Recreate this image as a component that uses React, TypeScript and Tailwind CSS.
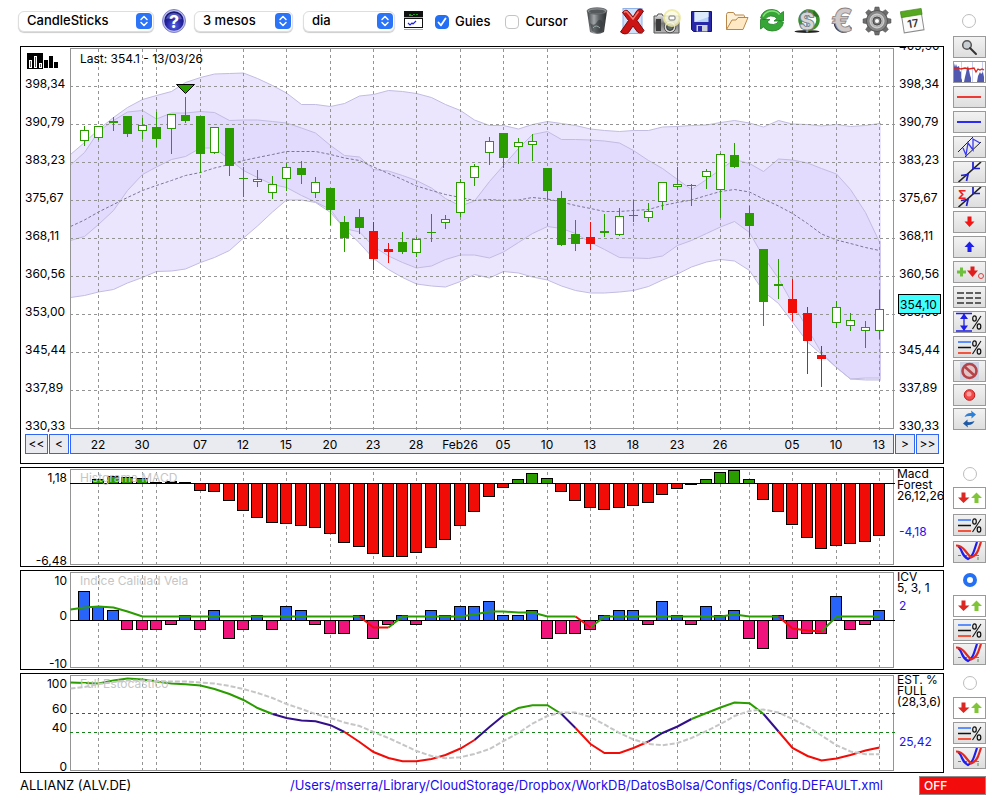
import React, { useState } from "react";

/* ---------- shared chart geometry ---------- */

const COUNT = 56;
const LEFT = 70;
const RIGHT = 894;
const GREEN = "#2a9c00";
const RED = "#f20c07";
const GRID = "#949494";

const xs = Array.from({ length: COUNT }, (_, i) => Math.round(84 + 14.454 * i));
const guideIndexes = [1, 4, 5, 8, 11, 14, 17, 20, 23, 26, 29, 32, 35, 38, 41, 44, 46, 49, 52, 55];
const dateLabels: [number, string][] = [
  [1, "22"], [4, "30"], [8, "07"], [11, "12"], [14, "15"], [17, "20"], [20, "23"], [23, "28"],
  [26, "Feb26"], [29, "05"], [32, "10"], [35, "13"], [38, "18"], [41, "23"], [44, "26"],
  [49, "05"], [52, "10"], [55, "13"],
];
const prices = ["405,90", "398,34", "390,79", "383,23", "375,67", "368,11", "360,56", "353,00", "345,44", "337,89", "330,33"];

type Candle = [number, number, number, number, "w" | "g" | "r"];
const candles: Candle[] = [
  [126, 130, 141, 146, "w"], [126, 126, 138, 140, "w"], [117, 121, 123, 131, "g"], [116, 116, 134, 137, "g"],
  [118, 125, 131, 139, "w"], [112, 127, 139, 147, "g"], [114, 114, 129, 154, "w"], [97, 115, 121, 123, "g"],
  [116, 116, 154, 173, "g"], [127, 127, 153, 154, "w"], [128, 128, 166, 176, "g"], [167, 178, 179, 197, "g"],
  [170, 179, 182, 187, "w"], [176, 184, 193, 199, "w"], [163, 167, 179, 191, "w"], [161, 168, 175, 184, "g"],
  [177, 182, 193, 198, "w"], [188, 188, 210, 225, "g"], [216, 222, 238, 252, "g"], [209, 217, 228, 234, "g"],
  [222, 231, 259, 270, "r"], [243, 249, 252, 263, "r"], [232, 242, 252, 254, "g"], [237, 239, 253, 257, "w"],
  [214, 232, 233, 242, "g"], [215, 219, 223, 229, "w"], [179, 182, 213, 217, "w"], [164, 166, 178, 186, "w"],
  [137, 141, 153, 165, "w"], [133, 133, 158, 168, "g"], [138, 142, 147, 164, "w"], [134, 141, 145, 161, "w"],
  [168, 168, 191, 200, "g"], [191, 198, 245, 246, "g"], [220, 234, 244, 251, "g"], [222, 237, 244, 250, "r"],
  [214, 231, 233, 237, "g"], [208, 216, 235, 236, "w"], [200, 215, 216, 222, "g"], [203, 211, 218, 222, "w"],
  [182, 182, 202, 210, "w"], [167, 184, 187, 190, "w"], [184, 185, 186, 206, "g"], [169, 171, 177, 189, "w"],
  [153, 154, 190, 218, "w"], [143, 155, 167, 168, "g"], [206, 213, 226, 237, "g"], [249, 249, 302, 326, "g"],
  [259, 284, 286, 299, "g"], [279, 299, 313, 321, "r"], [307, 313, 341, 374, "r"], [346, 355, 359, 387, "r"],
  [301, 307, 323, 328, "w"], [313, 320, 326, 331, "w"], [321, 327, 331, 348, "w"], [290, 309, 331, 339, "w"],
];

/* Each series starts with its value on the left edge of the plot. */
const outerUpper = [154, 142, 129, 117, 107, 99, 95, 91, 82, 77, 73.5, 73, 72.5, 78, 85, 92.5, 104, 104, 106, 103, 95.5, 94, 90, 91, 93, 97, 104, 110, 119.5, 125, 125, 128.5, 124, 121, 123, 125, 128.5, 130, 131, 130, 130, 126.5, 126, 125, 124.5, 122, 120, 122.5, 126.5, 120, 123.5, 124, 125.5, 124, 126, 125, 123];
const innerUpper = [164.5, 152, 131, 120, 111.5, 110, 118.5, 112.5, 112.5, 111, 112, 120, 119.5, 119.5, 121, 122.5, 127.5, 132.5, 145, 155, 156.5, 169, 170.5, 175, 180, 187.5, 198, 205.5, 200.5, 181, 165, 148, 134, 131, 139, 139, 139.5, 140.5, 142.5, 150, 160, 168, 179, 189, 179, 169, 159, 163, 171, 158.5, 159.5, 162.5, 168, 173.5, 189, 212, 241.5];
const innerLower = [240, 236, 224, 210, 190, 174, 166.5, 159, 156, 147.5, 147.5, 159, 170, 177, 184, 187, 195, 201.5, 209, 228, 231.5, 246, 255.5, 262, 267.5, 265.5, 259, 254.5, 254.5, 257.5, 251.5, 242, 233, 226, 228, 233, 242, 249, 257, 257.5, 258, 255.5, 245, 240, 233, 226.5, 221, 232, 256.5, 278, 303, 328, 352.5, 367, 378.5, 377.5, 377.5];
const outerLower = [297, 295, 291.5, 289, 282.5, 277, 271, 270.5, 268.5, 262, 257, 250, 237.5, 225.5, 211.5, 199.5, 199.5, 202, 212, 228, 242.5, 258, 269, 277, 283.5, 285.5, 286.5, 281, 274, 277.5, 271, 272.5, 276.5, 279.5, 285.5, 290, 292.5, 292.5, 291.5, 290, 286, 279.5, 273.5, 266.5, 261.5, 259, 260.5, 270, 291, 303, 321.5, 341.5, 354, 367, 378.5, 379.5, 379.5];
const average = [226, 219.5, 211.5, 204, 197, 190, 185, 180, 175, 172, 167.5, 164, 160, 157, 154, 151, 151, 151, 154, 157.5, 160, 166.5, 173, 179, 185.5, 190, 194, 197, 200, 199, 200, 199.5, 197, 198.5, 201.5, 205, 208, 211, 211, 210, 209, 205, 202, 199.5, 195, 191, 189, 191.5, 198.5, 205.5, 213, 223, 233.5, 239.5, 243, 247, 250];
const macd = [483, 479, 476, 477, 478, 482, 481, 482, 491, 492, 501, 511, 518, 523, 524, 526, 528, 534, 543, 547, 554, 557, 557, 553, 548, 540, 526, 512, 497, 488, 479, 473, 478, 492, 501, 508, 510, 508, 506, 503, 495, 489, 485, 479, 472, 470, 479, 500, 512, 525, 538, 549, 546, 544, 542, 536];
const quality = [6, 3, 2, -2, -2, -2, -1, 1, -2, 2, -4, -2, 1, -2, 3, 2, -1, -3, -3, 1, -4, -1, 1, -1, 2, 1, 3, 3, 4, 1, 1, 2, -4, -3, -3, -2, 1, 2, 2, -1, 4, 1, -1, 3, 1, 2, -4, -6, 1, -4, -3, -3, 5, -2, -1, 2];
const qualityLine = [609, 607, 606, 607, 611, 616, 616, 616, 616, 616, 616, 616, 616, 616, 616, 616, 616, 616, 616, 616, 616, 627, 627, 616, 616, 616, 616, 616, 614, 611, 611, 612, 612, 616, 616, 616, 627, 616, 616, 616, 616, 616, 616, 616, 616, 616, 614, 616, 616, 616, 628, 630, 631, 616, 616, 616, 616];
const stochastic = [682, 682.5, 683, 680, 678, 679, 681, 683, 683.7, 685, 688.5, 693.5, 699.5, 707.5, 713.5, 717.5, 720, 720.7, 724.7, 731.5, 741.5, 751.5, 757.5, 760.7, 760.7, 758.5, 754.5, 748, 739.5, 726.5, 715, 707.5, 704.7, 704.7, 713.5, 727.5, 743.5, 752.5, 752.5, 747.5, 741, 732.5, 726, 718.5, 712.5, 707, 702, 702.7, 713.5, 731, 747.5, 755.5, 760, 758, 754.5, 750, 747];
const signal = [688, 686.5, 683.5, 681.5, 680, 680, 680.5, 681, 681, 682, 683, 685.5, 688.5, 692.5, 697.5, 703.5, 708.5, 713.5, 717.5, 722, 725.5, 731.5, 737.5, 744, 750.5, 755.5, 757.7, 756.7, 753.5, 748.5, 740.5, 732.5, 723, 715.5, 712, 712, 716.5, 724, 732.5, 739, 743.5, 744.7, 742.5, 737.5, 730.5, 723.5, 715.5, 710.5, 709, 712, 718.5, 726, 735, 744.7, 751, 753.7, 753.7];

const px = (k: number) => (k === 0 ? LEFT + 0.5 : xs[k - 1] + 0.5);
const line = (s: number[], from = 0, to = s.length - 1) =>
  s.slice(from, to + 1).map((y, k) => `${px(from + k)},${y + 0.5}`).join(" ");
const bandLine = (s: number[]) => `${line(s)} 881,${s[s.length - 1] + 0.5}`;
const band = (top: number[], bottom: number[]) =>
  `${bandLine(top)} ${bandLine(bottom).split(" ").reverse().join(" ")}`;

function Guides({ top, bottom }: { top: number; bottom: number }) {
  return (
    <g stroke={GRID} strokeDasharray="3 3" shapeRendering="crispEdges">
      {guideIndexes.map((i) => (
        <line key={i} x1={xs[i] + 0.5} x2={xs[i] + 0.5} y1={top} y2={bottom} />
      ))}
    </g>
  );
}

function Frame({ top, bottom }: { top: number; bottom: number }) {
  return (
    <rect x={LEFT + 0.5} y={top + 0.5} width={RIGHT - LEFT - 1} height={bottom - top - 1} fill="none" stroke={GRID} shapeRendering="crispEdges" />
  );
}

/* ---------- chart panels ---------- */

function PriceChart({ guides }: { guides: boolean }) {
  return (
    <svg viewBox="21 47 922 385" className="block h-auto w-full text-[12px]" role="img" aria-label="CandleSticks">
      <polygon points={band(outerUpper, outerLower)} fill="#ebe6fe" />
      <polygon points={band(innerUpper, innerLower)} fill="#e3dbfd" />
      <g fill="none" stroke="#c3bce2" strokeWidth="1">
        {[outerUpper, innerUpper, innerLower, outerLower].map((s, k) => (
          <polyline key={k} points={bandLine(s)} />
        ))}
      </g>
      <rect x="879" y="242" width="2" height="137" fill="#d3cbef" />
      <polyline points={line(average)} fill="none" stroke="#7e7699" strokeDasharray="3 2" />
      {guides && (
        <>
          <Guides top={49} bottom={430} />
          <g stroke={GRID} strokeDasharray="3 3" shapeRendering="crispEdges">
            {prices.slice(1, 10).map((p, k) => (
              <line key={p} x1={LEFT} x2={RIGHT + 2} y1={86.5 + 38 * k} y2={86.5 + 38 * k} />
            ))}
          </g>
        </>
      )}
      <Frame top={48} bottom={429} />
      <g shapeRendering="crispEdges">
        {candles.map(([high, top, bottom, low, kind], i) => {
          const color = kind === "r" ? RED : GREEN;
          return (
            <g key={i}>
              <rect x={xs[i]} y={high} width="1" height={low - high} fill={color} />
              <rect x={xs[i] - 4} y={top} width="9" height={bottom - top} fill={color} />
              {kind === "w" && <rect x={xs[i] - 3} y={top + 1} width="7" height={bottom - top - 2} fill="#fff" />}
            </g>
          );
        })}
      </g>
      <path d="M176.5 84.5h18l-9 9z" fill={GREEN} stroke="#000" />
      <text x="80" y="63">Last: 354.1 - 13/03/26</text>
      <g shapeRendering="crispEdges">
        <path d="M27 53h16v16h-16z" fill="#000" />
        <path d="M29.500 60.500h2v7h-2zM34.500 56.500h2v11h-2zM39.500 63.500h2v4h-2z" fill="#555" stroke="#fff" />
        <path d="M44 60h4v8h-4zM49 56h4v12h-4zM54 62h4v6h-4z" fill="#000" />
      </g>
      {prices.map((p, k) => (
        <g key={p}>
          {k > 0 && <text x="25" y={50 + 38 * k}>{p}</text>}
          <text x="899" y={50 + 38 * k}>{p}</text>
        </g>
      ))}
      <rect x="898.5" y="294.500" width="42" height="19" fill="#40ffff" stroke="#000" shapeRendering="crispEdges" />
      <text x="900" y="309">354,10</text>
    </svg>
  );
}

function NavButton({ label, text }: { label: string; text: string }) {
  return (
    <button type="button" aria-label={label} className="border border-[#3366ee] bg-[#eaebf0] text-[12px] leading-[18px]">
      {text}
    </button>
  );
}

function DateBar() {
  return (
    <div className="mb-[9px] grid grid-cols-[23fr_20fr_824fr_20fr_23fr] gap-px pl-1 pr-[4px] pt-[2px]">
      <NavButton label="First" text="<<" />
      <NavButton label="Previous" text="<" />
      <div className="border border-[#3366ee] bg-[#eaebf0]">
        <svg viewBox="71 435 822 18" className="block h-auto w-full text-[12px]">
          {dateLabels.map(([i, label]) => (
            <text key={i} x={xs[i]} y="449" textAnchor="middle">{label}</text>
          ))}
        </svg>
      </div>
      <NavButton label="Next" text=">" />
      <NavButton label="Last" text=">>" />
    </div>
  );
}

function MacdChart({ guides }: { guides: boolean }) {
  return (
    <svg viewBox="21 468 922 98" className="block h-auto w-full text-[12px]" role="img" aria-label="Macd Forest">
      {guides && <Guides top={472} bottom={566} />}
      <Frame top={469} bottom={565} />
      <g shapeRendering="crispEdges">
        {macd.map((y, i) => {
          if (i === 0) return null;
          const up = y < 483;
          const top = up ? y : 483;
          const height = up ? 484 - y : y - 483;
          return (
            <g key={i}>
              <rect x={xs[i] - 6} y={top} width="12" height={height} fill="#000" />
              {height > 3 && <rect x={xs[i] - 5} y={top + 1} width="10" height={height - 2} fill={up ? GREEN : RED} />}
            </g>
          );
        })}
        <rect x={LEFT} y="483" width={RIGHT - LEFT + 1} height="1" fill="#000" />
      </g>
      <text x="80" y="482" fill="#c6c6c6">Histgrama MACD</text>
      <text x="67" y="482" textAnchor="end">1,18</text>
      <text x="67" y="565" textAnchor="end">-6,48</text>
      <text x="897" y="478">Macd</text>
      <text x="897" y="489">Forest</text>
      <text x="897" y="500">26,12,26</text>
      <text x="899" y="536" fill="#1a14ee">-4,18</text>
    </svg>
  );
}

function QualityChart({ guides }: { guides: boolean }) {
  return (
    <svg viewBox="21 571 922 98" className="block h-auto w-full text-[12px]" role="img" aria-label="ICV">
      <text x="80" y="585" fill="#c6c6c6">Indice Calidad Vela</text>
      {guides && <Guides top={575} bottom={669} />}
      <Frame top={572} bottom={668} />
      <g shapeRendering="crispEdges">
        {quality.map((v, i) => {
          const edge = Math.round(620 - 4.8 * v);
          const top = v > 0 ? edge : 620;
          const height = v > 0 ? 621 - edge : edge - 620;
          return (
            <g key={i}>
              <rect x={xs[i] - 6} y={top} width="12" height={height} fill="#000" />
              <rect x={xs[i] - 5} y={top + 1} width="10" height={height - 2} fill={v > 0 ? "#2864fa" : "#f0137c"} />
            </g>
          );
        })}
        <rect x={LEFT} y="620" width={RIGHT - LEFT + 1} height="1" fill="#000" />
      </g>
      <g fill="none" stroke={GREEN} strokeWidth="2">
        <polyline points={line(qualityLine, 0, 20)} />
        <polyline points={line(qualityLine, 22, 35)} />
        <polyline points={line(qualityLine, 36, 49)} />
        <polyline points={line(qualityLine, 52, 56)} />
      </g>
      <g fill="none" stroke={RED} strokeWidth="2">
        <polyline points={line(qualityLine, 20, 22)} />
        <polyline points={line(qualityLine, 35, 36)} />
        <polyline points={line(qualityLine, 49, 52)} />
      </g>
      <text x="67" y="585" textAnchor="end">10</text>
      <text x="67" y="620" textAnchor="end">0</text>
      <text x="67" y="668" textAnchor="end">-10</text>
      <text x="897" y="581">ICV</text>
      <text x="897" y="592">5, 3, 1</text>
      <text x="899" y="610" fill="#1a14ee">2</text>
    </svg>
  );
}

const stochasticParts: [number, number, string][] = [
  [0, 14, GREEN], [14, 19, "#33108a"], [19, 28, RED], [28, 30, "#33108a"], [30, 34, GREEN],
  [34, 35, "#33108a"], [35, 40, RED], [40, 43, "#33108a"], [43, 48, GREEN], [48, 49, "#33108a"], [49, 56, RED],
];

function StochasticChart({ guides }: { guides: boolean }) {
  return (
    <svg viewBox="21 674 922 98" className="block h-auto w-full text-[12px]" role="img" aria-label="Full Estocastico">
      {guides && <Guides top={678} bottom={772} />}
      <Frame top={675} bottom={771} />
      <g strokeDasharray="3 3" shapeRendering="crispEdges">
        <line x1={LEFT} x2={RIGHT + 1} y1="713.5" y2="713.5" stroke={RED} />
        <line x1={LEFT} x2={RIGHT + 1} y1="732.5" y2="732.5" stroke="#15801a" />
      </g>
      <g fill="none" strokeWidth="2">
        {stochasticParts.map(([from, to, color]) => (
          <polyline key={from} points={line(stochastic, from, to)} stroke={color} />
        ))}
        <polyline points={line(signal)} stroke="#c6c6c6" strokeDasharray="5 2" />
      </g>
      <text x="80" y="688" fill="#c6c6c6">Full Estocastico</text>
      <text x="67" y="688" textAnchor="end">100</text>
      <text x="67" y="713" textAnchor="end">60</text>
      <text x="67" y="732" textAnchor="end">40</text>
      <text x="67" y="771" textAnchor="end">0</text>
      <text x="897" y="684">EST. %</text>
      <text x="897" y="695">FULL</text>
      <text x="897" y="706">(28,3,6)</text>
      <text x="899" y="746" fill="#1a14ee">25,42</text>
    </svg>
  );
}

/* ---------- toolbar ---------- */

function Picker({ label, options, className }: { label: string; options: string[]; className: string }) {
  return (
    <div className={`relative h-[21px] ${className}`}>
      <select
        aria-label={label}
        className="block h-[21px] w-full appearance-none rounded-[6px] border border-[#dedede] bg-white pb-[2px] pl-2 text-[13px] font-medium leading-4 shadow-[0_1px_1px_rgba(0,0,0,0.2)]"
      >
        {options.map((o) => (
          <option key={o}>{o}</option>
        ))}
      </select>
      <svg viewBox="0 0 16 16" className="pointer-events-none absolute right-[2px] top-[2px] size-4">
        <rect width="16" height="16" rx="4" fill="#2b74f8" />
        <path d="M5 6.500 8 3.500l3 3M5 9.500l3 3 3-3" fill="none" stroke="#fff" strokeWidth="1.500" strokeLinecap="round" strokeLinejoin="round" />
      </svg>
    </div>
  );
}

function Check({ label, checked, onChange, className }: { label: string; checked: boolean; onChange: (v: boolean) => void; className: string }) {
  return (
    <label className={`flex items-center gap-[6px] pt-[2px] text-[13px] font-medium ${className}`}>
      <span className="relative size-[14px]">
        <input
          type="checkbox"
          checked={checked}
          onChange={(e) => onChange(e.target.checked)}
          className="block size-[14px] appearance-none rounded-[4px] border border-[#c4c4c4] bg-white checked:border-[#2470f5] checked:bg-[#2470f5]"
        />
        {checked && (
          <svg viewBox="0 0 14 14" className="pointer-events-none absolute inset-0">
            <path d="M3.500 7.500 6 10.300 10.500 3.500" fill="none" stroke="#fff" strokeWidth="1.800" strokeLinecap="round" strokeLinejoin="round" />
          </svg>
        )}
      </span>
      {label}
    </label>
  );
}

function HelpIcon() {
  return (
    <svg viewBox="0 0 24 24" className="block size-6">
      <defs>
        <radialGradient id="help" cx="50%" cy="75%" r="75%">
          <stop offset="0" stopColor="#5a63e8" />
          <stop offset="0.550" stopColor="#2323a0" />
          <stop offset="1" stopColor="#15156e" />
        </radialGradient>
      </defs>
      <circle cx="12" cy="12" r="11.500" fill="#b9bcf0" stroke="#7e80c4" />
      <circle cx="12" cy="12" r="9.800" fill="url(#help)" />
      <path d="M4 10a8.300 8.300 0 0 1 16 0c-4 1.500-6-2-16 0z" fill="#8d92ea" opacity="0.500" />
      <text x="12" y="18.500" textAnchor="middle" fill="#fff" fontSize="18" fontWeight="700">?</text>
    </svg>
  );
}

function ChartWindowIcon() {
  return (
    <svg viewBox="0 0 20 20" className="block size-5" shapeRendering="crispEdges">
      <path d="M0 0h19v6H0z" fill="#111" />
      <path d="M5 3h2v1h2V3h2v1H9v1H5zM12 3h2v1h-2z" fill="#1c9c1c" />
      <rect x="0.500" y="7.500" width="18" height="9" fill="#fff" stroke="#111" />
      <path d="M0 6h19v1H0zM0 18h19v1H0z" fill="#aaa" />
      <path d="m4 12 2 2 2-2 1 1 3-3" fill="none" stroke="#2222dd" strokeWidth="1.200" shapeRendering="auto" />
    </svg>
  );
}

const toolbarIcons: { name: string; art: React.ReactNode }[] = [
  {
    name: "Trash",
    art: (
      <>
        <defs>
          <linearGradient id="bin">
            <stop offset="0" stopColor="#3c3f41" />
            <stop offset="0.350" stopColor="#a2a6a8" />
            <stop offset="0.600" stopColor="#5d6163" />
            <stop offset="1" stopColor="#2b2d2e" />
          </linearGradient>
        </defs>
        <path d="M4 4h20L21 25q-7 4-14 0z" fill="url(#bin)" />
        <ellipse cx="14" cy="4" rx="10" ry="3.200" fill="#8a8e90" stroke="#55595c" strokeWidth="0.800" />
        <ellipse cx="14" cy="4.500" rx="8" ry="2" fill="#55595b" />
        <path d="M7 16q4 4 7-1t6 1l-1 8q-5 4-10 0z" fill="#303538" opacity="0.550" />
        <path d="M10 21q3-4 7 0" stroke="#9aa" fill="none" />
      </>
    ),
  },
  {
    name: "Delete",
    art: (
      <>
        <rect x="5" y="1.500" width="19" height="25" fill="#cfe0fb" stroke="#8db2ea" />
        <path d="M4.500 5.500q3.500-4 6-1l4.500 5.500 4-6.500q3-3 6.500.5l-6.500 9.500 7 10q-2 4-6.500 1.500L15 19l-4.500 6.500q-3.500 3-8-.5l8-11.500z" fill="#cc1414" stroke="#7c0808" />
        <path d="M6 5.500q2-2 3.500 0L15 12l5.500-7.500" fill="none" stroke="#f47a70" strokeWidth="1.400" />
      </>
    ),
  },
  {
    name: "Snapshot",
    art: (
      <>
        <defs>
          <linearGradient id="cam" x2="0" y2="1">
            <stop offset="0" stopColor="#f2f2f2" />
            <stop offset="0.500" stopColor="#777" />
            <stop offset="1" stopColor="#bbb" />
          </linearGradient>
        </defs>
        <path d="M1 9h3l1-2h4l1 2h16v17H1z" fill="url(#cam)" stroke="#555" />
        <path d="M3 12h5v12H3z" fill="#3b3b3b" />
        <circle cx="17" cy="20" r="5.800" fill="#d8d8d8" stroke="#555" />
        <circle cx="17" cy="20" r="3.400" fill="#5e6b64" stroke="#333" />
        <circle cx="19" cy="11" r="8" fill="#fcfbe0" stroke="#eeeaa0" strokeWidth="2" opacity="0.850" />
        <rect x="16" y="9" width="6" height="4" rx="1" fill="#fff" stroke="#777" />
      </>
    ),
  },
  {
    name: "Save",
    art: (
      <>
        <path d="M3.500 4.500h20v20h-18l-2-2z" fill="#2727a8" stroke="#15156e" />
        <path d="M6.500 5h14v10h-14z" fill="#b7d3f7" />
        <path d="M6.500 5h14v5l-14 5z" fill="#dceafc" />
        <path d="M8.500 18h11v6.500h-11z" fill="#cfd2da" />
        <path d="M10 19h4v5.500h-4z" fill="#2727a8" />
      </>
    ),
  },
  {
    name: "Open",
    art: (
      <>
        <path d="M3.500 22.500v-15q0-1.500 1.500-2h5q1.500 0 2 2.500h8.500q1 0 1 2V14" fill="#fdf0d8" stroke="#b98848" />
        <path d="M3.500 22.500 9 13h4l2-2.500h10L20 22.500z" fill="#ffe9c4" stroke="#b98848" strokeLinejoin="round" />
      </>
    ),
  },
  {
    name: "Refresh",
    art: (
      <g fill="#36a636" stroke="#1f7d22" strokeWidth="0.800">
        <path d="M2.500 11q2-8.500 11.500-8.500 5.500 0 8.500 4l3-2v9.500h-9.500l3-2.500q-2.500-3-6.500-2.500-4 .3-5.500 4z" />
        <path d="M25.500 15.500q-2 8.500-11.500 8.500-5.500 0-8.500-4l-3 2v-9.500h9.500l-3 2.500q2.500 3 6.500 2.500 4-.3 5.500-4z" />
        <path d="M5 9.500q3-5.500 9-5.500 5 0 7.500 3.500" fill="none" stroke="#8be07e" strokeWidth="1.500" />
      </g>
    ),
  },
  {
    name: "Dollar",
    art: (
      <>
        <ellipse cx="14" cy="24.500" rx="12.500" ry="1.500" fill="#222" />
        <circle cx="16" cy="13" r="9" fill="none" stroke="#3b8f2e" strokeWidth="3.500" />
        <path d="M21 3l5 7-7-1z" fill="#2c6f22" />
        <text x="14" y="23" textAnchor="middle" fontSize="24" fontWeight="800" fill="#d5d5d5" stroke="#777" strokeWidth="0.800">$</text>
      </>
    ),
  },
  {
    name: "Euro",
    art: (
      <>
        <path d="M24 21q-4 6-11 4.500Q6 23 5.500 15h3Q10 22 15 21.500q4 0 6-3z" fill="#3a3030" />
        <text x="14" y="25" textAnchor="middle" fontSize="32" fontWeight="800" fill="#cfc9c9" stroke="#8b8383" strokeWidth="0.800">€</text>
      </>
    ),
  },
  {
    name: "Settings",
    art: (
      <>
        <g fill="#6d6d6d" stroke="#4d4d4d" strokeWidth="0.500">
          {[0, 45, 90, 135, 180, 225, 270, 315].map((a) => (
            <path key={a} d="M11 5l1-5h4l1 5z" transform={`rotate(${a} 14 14)`} />
          ))}
        </g>
        <circle cx="14" cy="14" r="10.500" fill="#868686" stroke="#555" />
        <circle cx="14" cy="14" r="7" fill="#b4b4b4" stroke="#d8d8d8" />
        <circle cx="14" cy="14" r="4" fill="#777" stroke="#484848" />
        <circle cx="14" cy="14" r="2" fill="#fff" />
      </>
    ),
  },
  {
    name: "Calendar",
    art: (
      <g transform="rotate(-9 14 14)">
        <rect x="4.500" y="4.500" width="20" height="20" fill="#fbfbfb" stroke="#8b8b8b" />
        <path d="M4 3h21v6H4z" fill="#55a81f" stroke="#3e8512" strokeWidth="0.600" />
        <text x="14.500" y="20.500" textAnchor="middle" fontSize="11" fontWeight="600" fill="#333">17</text>
      </g>
    ),
  },
];

/* ---------- side tools ---------- */

function SideButton({ name, children, white = false }: { name: string; children: React.ReactNode; white?: boolean }) {
  return (
    <button
      type="button"
      aria-label={name}
      className={`h-[22px] w-[33px] shrink-0 border border-[#9a9a9a] ${white ? "bg-white" : "bg-linear-to-b from-[#f2f2f2] to-[#dedede]"}`}
    >
      <svg viewBox="0 0 31 20" className="block h-5 w-full">{children}</svg>
    </button>
  );
}

const percentArt = (
  <g fill="none" stroke="#111">
    <ellipse cx="20.500" cy="6.500" rx="1.800" ry="2.600" strokeWidth="1.200" />
    <ellipse cx="25" cy="14.500" rx="1.800" ry="2.600" strokeWidth="1.200" />
    <path d="M27 4 18.500 17" strokeWidth="1.100" />
  </g>
);
const levelsArt = (
  <>
    <path d="M4 5h13" stroke="#2f6fff" strokeWidth="1.500" />
    <path d="M4 10.500h13" stroke="#111" strokeWidth="1.500" />
    <path d="M4 16h13" stroke="#f2553d" strokeWidth="2" />
    {percentArt}
  </>
);
const crossArt = (
  <>
    <path d="M4.500 20 27 0" stroke="#222" strokeWidth="1.600" />
    <path d="M7 13.500l7-1-1.500 6.500M19 0v6.500h7" stroke="#1f1fd0" strokeWidth="1.700" fill="none" />
  </>
);

const drawingTools: { name: string; art: React.ReactNode; white?: boolean }[] = [
  {
    name: "Zoom",
    art: (
      <>
        <circle cx="13" cy="8" r="4.300" fill="#c9ced3" stroke="#555" strokeWidth="1.500" />
        <path d="m16 11 6 6" stroke="#333" strokeWidth="2" strokeLinecap="round" />
      </>
    ),
  },
  {
    name: "Volume profile",
    white: true,
    art: (
      <>
        <path d="M7.500 0v20M18.500 0v20M28.500 0v20" stroke="#c9cfee" />
        <path d="M0 20V1l1 4 1-3 1 3 2-1 1 6 1-1v7l1 2v2zM10 20l1-5 1-4 1-5 1-2 1 4 1 5 1 3v4zM23 20l1-6 2-4 1 2 2-2 1 5v5z" fill="#5058b0" />
        <path d="M0 6h4l3 1 4-1 4 1 5-1 2 4 2-3 2 1 2-1 2 1" stroke="#e0231b" strokeWidth="1.300" fill="none" />
      </>
    ),
  },
  { name: "Red line", art: <path d="M3 10h24" stroke="#ee3a35" strokeWidth="2" /> },
  { name: "Blue line", art: <path d="M3 10h24" stroke="#2b2bf5" strokeWidth="2" /> },
  {
    name: "Channel",
    art: (
      <>
        <path d="M4 15 19 0M11 20 27 5" stroke="#222" />
        <path d="M9 11l3 7 2-12 5 7V2l7 4" stroke="#3a3af0" strokeWidth="1.300" fill="none" />
      </>
    ),
  },
  { name: "Trend", art: crossArt },
  {
    name: "Sum trend",
    art: (
      <>
        {crossArt}
        <text x="4" y="12" fontSize="12" fontWeight="700" fill="#e22">Σ</text>
      </>
    ),
  },
  { name: "Sell mark", art: <path d="M13.500 4.500h4v5h3L15.500 15l-5-5.500h3z" fill="#f31414" /> },
  { name: "Buy mark", art: <path d="M13.500 15h4v-5h3L15.500 4.500l-5 5.500h3z" fill="#1f1ff0" /> },
  {
    name: "Add mark",
    art: (
      <>
        <path d="M3 10h9M7.500 5.500v9" stroke="#6fbf3f" strokeWidth="3" />
        <path d="M16.500 4.500h4v4h3.500L18.500 15 13 8.500h3.500z" fill="#e01c1c" />
        <circle cx="27" cy="14" r="2.500" fill="none" stroke="#e04040" />
      </>
    ),
  },
  { name: "Dashed lines", art: <path d="M3 6h7M12 6h7M21 6h6M3 11h7M12 11h7M21 11h6M3 16h7M12 16h7M21 16h6" stroke="#333" strokeWidth="1.600" /> },
  {
    name: "Range percent",
    art: (
      <>
        <path d="M2 1.500h16M2 19h16M10 2v16" stroke="#1f1fe8" strokeWidth="1.300" />
        <path d="M10 1.500 14 7H6zM10 19l4-5.500H6z" fill="#1f1fe8" />
        {percentArt}
      </>
    ),
  },
  { name: "Levels percent", art: levelsArt },
];

const actionTools: { name: string; art: React.ReactNode }[] = [
  {
    name: "Disable",
    art: (
      <>
        <rect x="6" y="1" width="19" height="18" fill="#cdd3e3" />
        <circle cx="15.500" cy="10" r="7" fill="#e3c3c6" stroke="#b5434a" strokeWidth="2.600" />
        <path d="M10.500 5.500 20.500 14.500" stroke="#b5434a" strokeWidth="2.600" />
      </>
    ),
  },
  {
    name: "Record",
    art: (
      <>
        <circle cx="15.500" cy="10" r="5.300" fill="#f24a4a" stroke="#c31a1a" />
        <circle cx="15" cy="9" r="2.500" fill="#ff9c9c" />
      </>
    ),
  },
  {
    name: "Sync",
    art: (
      <>
        <path d="M10.500 8q2-4.500 7-4l-.5-2.500 5 4-4.500 4V7q-4-.5-7 1z" fill="#2e7fd6" />
        <path d="M20.500 12q-2 4.500-7 4l.5 2.500-5-4 4.500-4V13q4 .5 7-1z" fill="#1d5aa8" />
      </>
    ),
  },
];

type PanelToolsProps = { name: string; selected: boolean; onSelect: () => void; className: string; toolsClassName: string };

function PanelTools({ name, selected, onSelect, className, toolsClassName }: PanelToolsProps) {
  return (
    <div className={`flex flex-col items-center ${className}`}>
      <PanelRadio name={name} selected={selected} onSelect={onSelect} />
      <div className={`flex flex-col ${toolsClassName}`}>
        <SideButton name={`${name} marks`} white>
          <path d="M7.500 4.500h4v5h4L9.500 15l-5.500-5.500h3.500z" fill="#dc2722" />
          <path d="M20.500 15h4v-5H28L22.500 4.500 17 10h3.500z" fill="#80c535" />
        </SideButton>
        <SideButton name={`${name} levels`}>{levelsArt}</SideButton>
        <SideButton name={`${name} crossing`}>
          <path d="M4 13.500h24M24 15v5" stroke="#5b8f4b" strokeDasharray="3 3" />
          <path d="M4 4q2 1 4 6t6 7q4-2 6-8l3-9" stroke="#1f1fe8" strokeWidth="2.200" fill="none" />
          <path d="M2 3.500q5 0 9 5t6 7q5-2 7-7l3-8.500" stroke="#e22a22" strokeWidth="2.200" fill="none" />
        </SideButton>
      </div>
    </div>
  );
}

function PanelRadio({ name, selected, onSelect }: { name: string; selected: boolean; onSelect: () => void }) {
  return (
    <input
      type="radio"
      name="panel"
      aria-label={name}
      checked={selected}
      onChange={onSelect}
      className="block size-[14px] shrink-0 appearance-none rounded-full border border-[#bdbdbd] bg-white checked:border-[4px] checked:border-[#2470f5]"
    />
  );
}

/* ---------- page ---------- */

export default function App() {
  const [guides, setGuides] = useState(true);
  const [cursor, setCursor] = useState(false);
  const [panel, setPanel] = useState("ICV");

  return (
    <div className="min-h-screen bg-white font-['Inter',sans-serif] text-black">
      <header className="flex h-9 items-center pl-[18px] pr-6 pt-[6px]">
        <Picker label="Chart type" options={["CandleSticks"]} className="w-[136px]" />
        <button type="button" aria-label="Help" className="ml-2"><HelpIcon /></button>
        <Picker label="Range" options={["3 mesos"]} className="ml-2 w-[99px]" />
        <Picker label="Interval" options={["dia"]} className="ml-[10px] w-[92px]" />
        <button type="button" aria-label="Chart window" className="ml-[9px]"><ChartWindowIcon /></button>
        <Check label="Guies" checked={guides} onChange={setGuides} className="ml-[11px]" />
        <Check label="Cursor" checked={cursor} onChange={setCursor} className="ml-[15px]" />
        <div className="ml-[15px] flex gap-[7px]">
          {toolbarIcons.map(({ name, art }) => (
            <button key={name} type="button" aria-label={name}>
              <svg viewBox="0 0 28 28" className="block size-7 overflow-visible">{art}</svg>
            </button>
          ))}
        </div>
        <div className="ml-auto">
          <PanelRadio name="Price" selected={panel === "Price"} onSelect={() => setPanel("Price")} />
        </div>
      </header>

      <main className="grid grid-cols-[1fr_33px] items-start gap-x-[9px] gap-y-[3px] pl-5 pr-[14px]">
        <section className="mt-[10px] border border-black">
          <PriceChart guides={guides} />
          <DateBar />
        </section>
        <div className="flex flex-col gap-[2px]">
          <div className="flex flex-col gap-[3px]">
            {drawingTools.map(({ name, art, white }) => (
              <SideButton key={name} name={name} white={white}>{art}</SideButton>
            ))}
          </div>
          <div className="flex flex-col gap-[2px]">
            {actionTools.map(({ name, art }) => (
              <SideButton key={name} name={name}>{art}</SideButton>
            ))}
          </div>
        </div>

        <section className="border border-black"><MacdChart guides={guides} /></section>
        <PanelTools name="Macd" selected={panel === "Macd"} onSelect={() => setPanel("Macd")} className="gap-[6px]" toolsClassName="gap-[5px]" />

        <section className="border border-black"><QualityChart guides={guides} /></section>
        <PanelTools name="ICV" selected={panel === "ICV"} onSelect={() => setPanel("ICV")} className="gap-2 pt-[3px]" toolsClassName="gap-[2px]" />

        <section className="border border-black"><StochasticChart guides={guides} /></section>
        <PanelTools name="Stochastic" selected={panel === "Stochastic"} onSelect={() => setPanel("Stochastic")} className="gap-[7px] pt-[3px]" toolsClassName="gap-[3px]" />
      </main>

      <footer className="flex items-center pl-5 pr-[14px] pt-[3px] text-[13px]">
        <span>ALLIANZ (ALV.DE)</span>
        <span className="ml-auto text-[#1a0cee]">/Users/mserra/Library/CloudStorage/Dropbox/WorkDB/DatosBolsa/Configs/Config.DEFAULT.xml</span>
        <button type="button" className="ml-9 h-[19px] w-[67px] border border-[#8c8c8c] bg-[#f20c0c] pl-1 text-left text-[12px] font-medium leading-[17px] text-white">OFF</button>
      </footer>
    </div>
  );
}
